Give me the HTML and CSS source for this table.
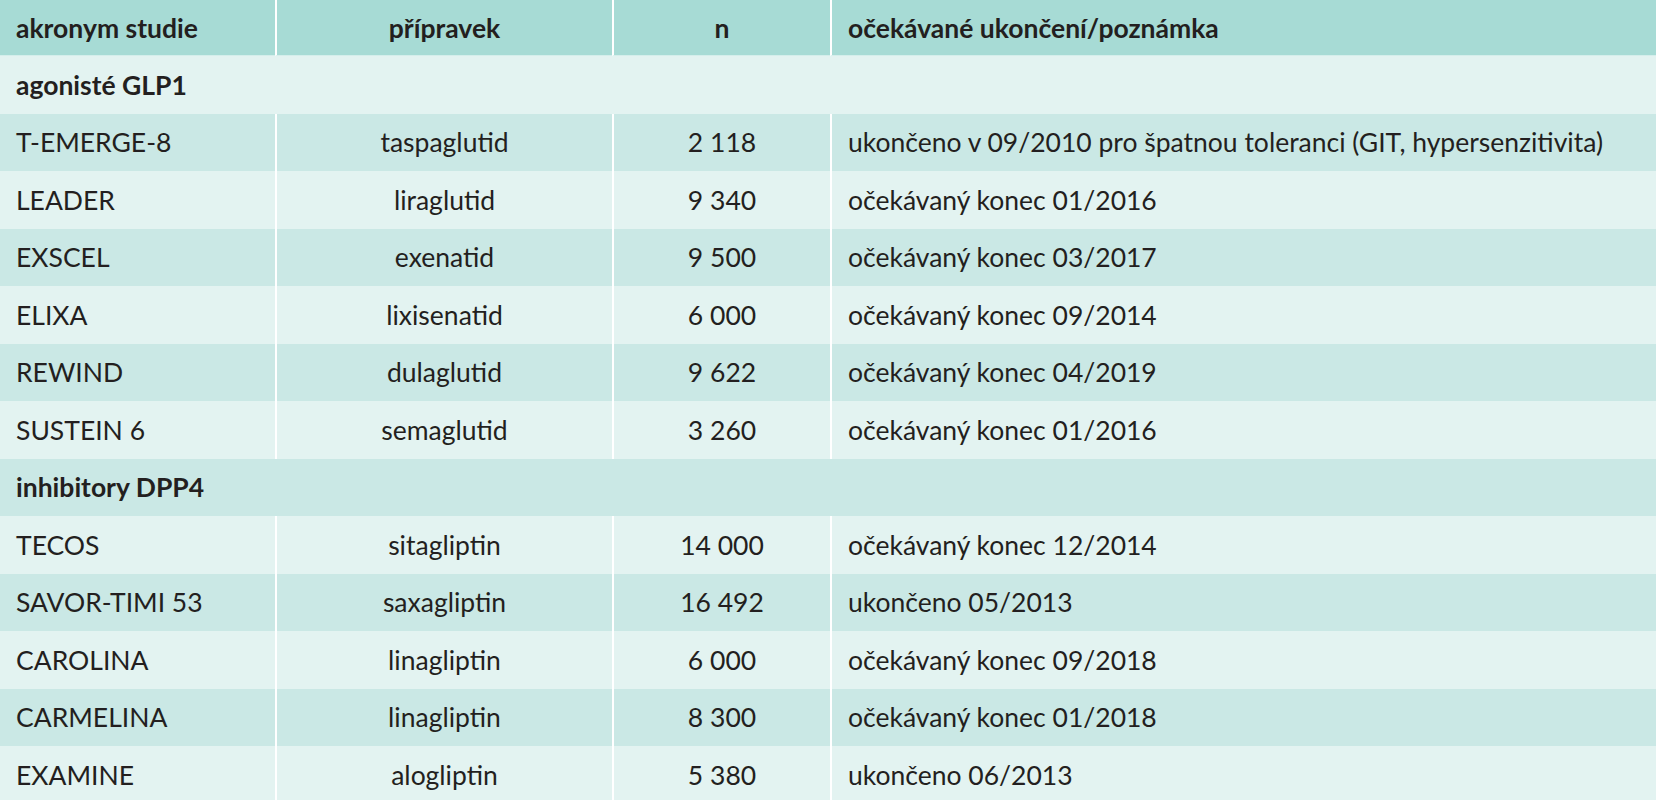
FILE: index.html
```html
<!DOCTYPE html>
<html lang="cs"><head><meta charset="utf-8"><title>Studie</title><link rel="stylesheet" href="styles.css"></head>
<body>
<table class="studies">
<colgroup><col class="c1"><col class="c2"><col class="c3"><col class="c4"></colgroup>
<thead>
<tr><th class="l">akronym studie</th><th class="c">přípravek</th><th class="c">n</th><th class="l">očekávané ukončení/poznámka</th></tr>
</thead>
<tbody>
<tr class="group"><td colspan="4">agonisté GLP1</td></tr>
<tr><td>T-EMERGE-8</td><td class="c">taspaglutid</td><td class="c">2 118</td><td>ukončeno v 09/2010 pro špatnou toleranci (GIT, hypersenzitivita)</td></tr>
<tr><td>LEADER</td><td class="c">liraglutid</td><td class="c">9 340</td><td>očekávaný konec 01/2016</td></tr>
<tr><td>EXSCEL</td><td class="c">exenatid</td><td class="c">9 500</td><td>očekávaný konec 03/2017</td></tr>
<tr><td>ELIXA</td><td class="c">lixisenatid</td><td class="c">6 000</td><td>očekávaný konec 09/2014</td></tr>
<tr><td>REWIND</td><td class="c">dulaglutid</td><td class="c">9 622</td><td>očekávaný konec 04/2019</td></tr>
<tr><td>SUSTEIN 6</td><td class="c">semaglutid</td><td class="c">3 260</td><td>očekávaný konec 01/2016</td></tr>
<tr class="group"><td colspan="4">inhibitory DPP4</td></tr>
<tr><td>TECOS</td><td class="c">sitagliptin</td><td class="c">14 000</td><td>očekávaný konec 12/2014</td></tr>
<tr><td>SAVOR-TIMI 53</td><td class="c">saxagliptin</td><td class="c">16 492</td><td>ukončeno 05/2013</td></tr>
<tr><td>CAROLINA</td><td class="c">linagliptin</td><td class="c">6 000</td><td>očekávaný konec 09/2018</td></tr>
<tr><td>CARMELINA</td><td class="c">linagliptin</td><td class="c">8 300</td><td>očekávaný konec 01/2018</td></tr>
<tr><td>EXAMINE</td><td class="c">alogliptin</td><td class="c">5 380</td><td>ukončeno 06/2013</td></tr>
</tbody>
</table>
</body></html>
```
FILE: styles.css
```css
html, body {
  margin: 0;
  padding: 0;
  background: #ffffff;
}
body {
  font-family: Lato, "Open Sans", sans-serif;
  font-size: 26.5px;
  color: #231f20;
}
.studies {
  width: 1656px;
  table-layout: fixed;
  border-collapse: separate;
  border-spacing: 0;
}
.c1 { width: 275px; }
.c2 { width: 337px; }
.c3 { width: 218px; }
.c4 { width: auto; }

.studies th,
.studies td {
  padding: 0 16px;
  white-space: nowrap;
  text-align: left;
  vertical-align: middle;
}
.studies th + th,
.studies td + td {
  border-left: 2px solid #ffffff;
}
.studies .c { text-align: center; }
.studies thead th {
  height: 55px;
  background: #a7dbd5;
  border-bottom: 1px solid #d4eeeb;
  font-weight: 700;
}
.studies tbody td {
  height: 57.5px;
}
.studies tbody tr:nth-child(odd) td { background: #e3f3f1; }
.studies tbody tr:nth-child(even) td { background: #cae8e5; }
.studies tr.group td { font-weight: 700; }
```
